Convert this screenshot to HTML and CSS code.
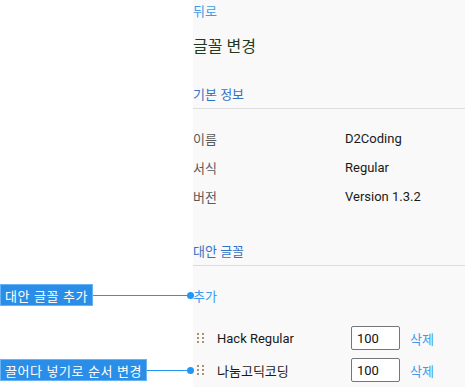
FILE: index.html
```html
<!DOCTYPE html>
<html lang="ko">
<head>
<meta charset="utf-8">
<link rel="stylesheet" href="styles.css">
</head>
<body>
<div class="page">
  <div class="gutter"></div>
  <main class="panel">
    <a class="link back">뒤로</a>
    <h1 class="title">글꼴 변경</h1>
    <h2 class="section">기본 정보</h2>
    <div class="info">
      <div class="info-row"><span class="key">이름</span><span class="val">D2Coding</span></div>
      <div class="info-row"><span class="key">서식</span><span class="val">Regular</span></div>
      <div class="info-row"><span class="key">버전</span><span class="val">Version 1.3.2</span></div>
    </div>
    <h2 class="section section-alt">대안 글꼴</h2>
    <div class="add-row">
      <a class="link">추가</a>
      <div class="callout callout-add">
        <span class="callout-label">대안 글꼴 추가</span>
      </div>
    </div>
    <div class="font-list">
      <div class="font-row">
        <span class="handle"><i></i><i></i><i></i><i></i><i></i><i></i></span>
        <span class="font-name">Hack Regular</span>
        <input class="weight" type="text" value="100">
        <a class="link del">삭제</a>
      </div>
      <div class="font-row">
        <span class="handle"><i></i><i></i><i></i><i></i><i></i><i></i></span>
        <span class="font-name">나눔고딕코딩</span>
        <input class="weight" type="text" value="100">
        <a class="link del">삭제</a>
        <div class="callout callout-drag">
          <span class="callout-label">끌어다 넣기로 순서 변경</span>
        </div>
      </div>
    </div>
  </main>
</div>
</body>
</html>
```
FILE: styles.css
```css
* { box-sizing: border-box; }
html, body { margin: 0; padding: 0; background: #ffffff; }
body {
  font-family: Roboto, "Noto Sans CJK KR", sans-serif;
  font-size: 13px;
  color: #222;
}
.page {
  display: grid;
  grid-template-columns: 193px 1fr;
  height: 387px;
  overflow: hidden;
}
.panel {
  background: #f9f9f9;
  display: flex;
  flex-direction: column;
}
.link {
  color: #3d9bef;
  cursor: pointer;
}
.back {
  height: 20px;
  display: flex;
  align-items: center;
}
.title {
  margin: 13px 0 0;
  height: 24px;
  display: flex;
  align-items: center;
  font-size: 16px;
  font-weight: normal;
  color: #1f3b1f;
}
.section {
  margin: 24px 0 0;
  height: 28px;
  padding-bottom: 3px;
  display: flex;
  align-items: center;
  font-size: 13px;
  font-weight: normal;
  color: #3272c4;
  border-bottom: 1px solid #dddddd;
}
.section-alt { margin-top: 26px; height: 29px; padding-bottom: 2px; }
.info {
  padding-top: 15px;
  display: flex;
  flex-direction: column;
}
.info-row {
  height: 29px;
  display: grid;
  grid-template-columns: 152px 1fr;
  align-items: center;
}
.key { color: #5a5a5a; }
.val { color: #1a1a1a; }
.add-row {
  position: relative;
  margin-top: 17px;
  height: 24px;
  display: flex;
  align-items: center;
}
.font-list {
  margin-top: 19px;
  display: flex;
  flex-direction: column;
  gap: 8px;
}
.font-row {
  position: relative;
  height: 24px;
  display: flex;
  align-items: center;
}
.handle {
  margin-left: 4px;
  width: 7px;
  display: grid;
  grid-template-columns: 2px 2px;
  column-gap: 3px;
  row-gap: 2px;
}
.handle i {
  display: block;
  width: 2px;
  height: 2px;
  background: #a89276;
}
.font-name {
  margin-left: 13px;
  width: 134px;
  color: #1a1a1a;
}
.weight {
  width: 49px;
  height: 24px;
  border: 1px solid #767676;
  border-radius: 2px;
  background: #fff;
  padding: 0 0 0 5px;
  font-family: Roboto, sans-serif;
  font-size: 13px;
  color: #111;
}
.del { margin-left: 10px; }
.callout {
  position: absolute;
  right: 100%;
  top: 50%;
  display: flex;
  align-items: center;
  transform: translateY(-50%);
  margin-right: 2px;
}
.callout::after {
  content: "";
  position: absolute;
  right: -3px;
  top: 50%;
  width: 7px;
  height: 7px;
  margin-top: -3.5px;
  border-radius: 50%;
  background: #2196f3;
}
.callout-add { left: -193px; }
.callout-drag { left: -193px; }
.callout-label {
  background: #2a8ee8;
  border: 1px solid #66b3f5;
  color: #fff;
  height: 22px;
  padding: 0 4px;
  display: flex;
  align-items: center;
  white-space: nowrap;
  letter-spacing: 0.6px;
}
.callout::before {
  content: "";
  flex: 1;
  order: 2;
  height: 1px;
  background: #2196f3;
}
```
